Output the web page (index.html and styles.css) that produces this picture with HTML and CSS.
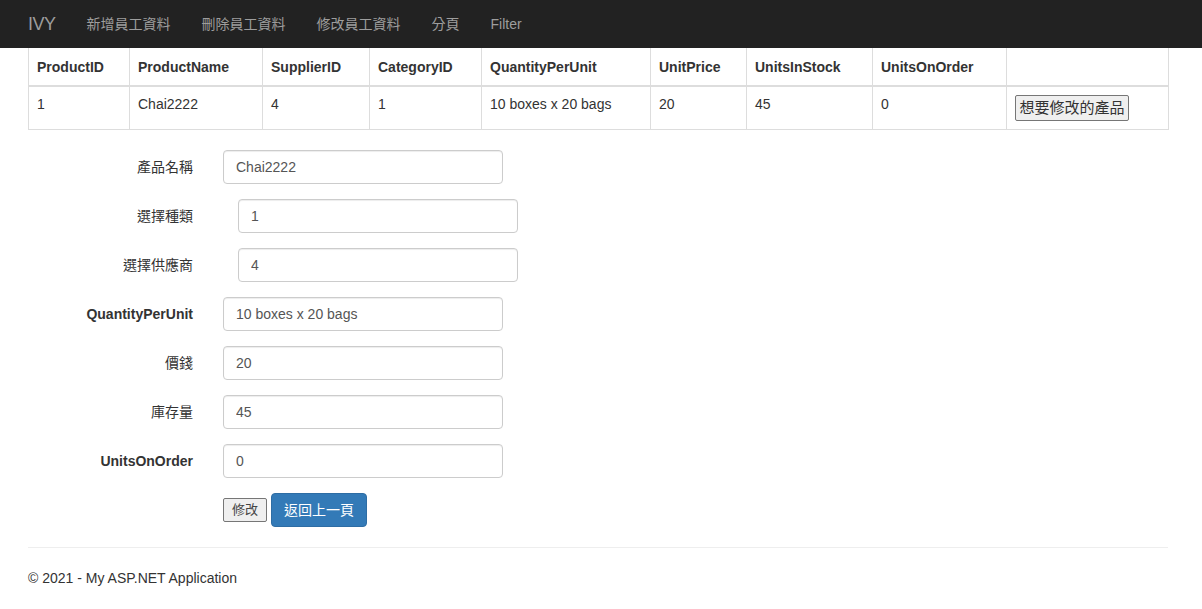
FILE: index.html
```html
<!DOCTYPE html>
<html lang="zh-Hant">
<head>
<meta charset="utf-8">
<title>修改產品</title>
<link rel="stylesheet" href="styles.css">
</head>
<body>
<nav class="navbar">
  <div class="nav-inner">
    <a class="brand" href="#">IVY</a>
    <ul class="nav-links">
      <li><a href="#">新增員工資料</a></li>
      <li><a href="#">刪除員工資料</a></li>
      <li><a href="#">修改員工資料</a></li>
      <li><a href="#">分頁</a></li>
      <li><a href="#">Filter</a></li>
    </ul>
  </div>
</nav>
<main class="container">
  <table class="table">
    <colgroup>
      <col class="c1"><col class="c2"><col class="c3"><col class="c4"><col class="c5"><col class="c6"><col class="c7"><col class="c8"><col class="c9">
    </colgroup>
    <thead>
      <tr>
        <th>ProductID</th>
        <th>ProductName</th>
        <th>SupplierID</th>
        <th>CategoryID</th>
        <th>QuantityPerUnit</th>
        <th>UnitPrice</th>
        <th>UnitsInStock</th>
        <th>UnitsOnOrder</th>
        <th></th>
      </tr>
    </thead>
    <tbody>
      <tr>
        <td>1</td>
        <td>Chai2222</td>
        <td>4</td>
        <td>1</td>
        <td>10 boxes x 20 bags</td>
        <td>20</td>
        <td>45</td>
        <td>0</td>
        <td><button class="btn-plain btn-big" type="button">想要修改的產品</button></td>
      </tr>
    </tbody>
  </table>

  <form class="form-horizontal">
    <div class="form-group">
      <label class="control-label cjk">產品名稱</label>
      <div class="field"><input class="form-control" type="text" value="Chai2222"></div>
    </div>
    <div class="form-group">
      <label class="control-label cjk">選擇種類</label>
      <div class="field indent"><input class="form-control" type="text" value="1"></div>
    </div>
    <div class="form-group">
      <label class="control-label cjk">選擇供應商</label>
      <div class="field indent"><input class="form-control" type="text" value="4"></div>
    </div>
    <div class="form-group">
      <label class="control-label">QuantityPerUnit</label>
      <div class="field"><input class="form-control" type="text" value="10 boxes x 20 bags"></div>
    </div>
    <div class="form-group">
      <label class="control-label cjk">價錢</label>
      <div class="field"><input class="form-control" type="text" value="20"></div>
    </div>
    <div class="form-group">
      <label class="control-label cjk">庫存量</label>
      <div class="field"><input class="form-control" type="text" value="45"></div>
    </div>
    <div class="form-group">
      <label class="control-label">UnitsOnOrder</label>
      <div class="field"><input class="form-control" type="text" value="0"></div>
    </div>
    <div class="form-group buttons">
      <span class="control-label"></span>
      <div class="field btn-row">
        <button class="btn-plain btn-small" type="button">修改</button>
        <a class="btn-primary" href="#">返回上一頁</a>
      </div>
    </div>
  </form>

  <hr class="rule">
  <footer class="footer">
    <p>© 2021 - My ASP.NET Application</p>
  </footer>
</main>
</body>
</html>
```

FILE: styles.css
```css
* { box-sizing: border-box; }

html, body {
  margin: 0;
  padding: 0;
}

body {
  font-family: "Liberation Sans", Arial, "Noto Sans CJK TC", sans-serif;
  font-size: 14px;
  line-height: 20px;
  color: #333;
  background: #fff;
}

.navbar {
  background: #222;
  height: 48px;
}

.nav-inner {
  display: flex;
  align-items: center;
  height: 48px;
  padding-left: 13px;
}

.brand {
  font-size: 18px;
  line-height: 20px;
  color: #9d9d9d;
  text-decoration: none;
  padding: 0 15px;
  letter-spacing: -0.5px;
}

.nav-links {
  list-style: none;
  margin: 0;
  padding: 0 0 0 1px;
  display: flex;
}

.nav-links li a {
  display: block;
  color: #9d9d9d;
  text-decoration: none;
  padding: 0 16px 0 15px;
  font-size: 14px;
  line-height: 20px;
}

.container {
  width: 1140px;
  margin-left: 28px;
}

.table {
  width: 1140px;
  table-layout: fixed;
  border-collapse: collapse;
  margin-bottom: 20px;
}

.c1 { width: 101px; }
.c2 { width: 133px; }
.c3 { width: 107px; }
.c4 { width: 112px; }
.c5 { width: 169px; }
.c6 { width: 96px; }
.c7 { width: 126px; }
.c8 { width: 134px; }
.c9 { width: 162px; }

.table th,
.table td {
  border: 1px solid #ddd;
  padding: 8px;
  text-align: left;
  vertical-align: top;
  line-height: 20px;
}

.table thead tr th {
  border-top: 0;
  border-bottom: 2px solid #ddd;
  font-weight: bold;
  padding-top: 9px;
}

.table tbody td {
  padding-top: 7px;
  padding-bottom: 8px;
}

.btn-plain {
  font-family: "Liberation Sans", Arial, "Noto Sans CJK TC", sans-serif;
  font-size: 13px;
  line-height: 16px;
  color: #444;
  background: #efefef;
  border: 1px solid #767676;
  border-radius: 2px;
  padding: 3px 6px;
  height: 24px;
  white-space: nowrap;
  vertical-align: middle;
}

.btn-small {
  width: 44px;
  padding: 3px 0;
  text-align: center;
}

.btn-big {
  font-size: 15px;
  height: 26px;
  width: 114px;
  padding: 2px 0;
  text-align: center;
  margin-top: 1px;
  margin-left: 0;
  color: #333;
}

.form-horizontal {
  display: block;
}

.form-group {
  display: flex;
  align-items: flex-start;
  margin-bottom: 15px;
}

.control-label {
  display: block;
  width: 180px;
  padding-right: 15px;
  text-align: right;
  font-weight: bold;
  padding-top: 7px;
  line-height: 20px;
}

.control-label.cjk {
  font-weight: normal;
}

.field {
  margin-left: 15px;
}

.field.indent {
  margin-left: 30px;
}

.form-control {
  display: block;
  width: 280px;
  height: 34px;
  padding: 6px 12px;
  font-family: "Liberation Sans", Arial, "Noto Sans CJK TC", sans-serif;
  font-size: 14px;
  line-height: 20px;
  color: #555;
  background: #fff;
  border: 1px solid #ccc;
  border-radius: 4px;
  box-shadow: inset 0 1px 1px rgba(0, 0, 0, 0.075);
}

.buttons {
  margin-bottom: 20px;
}

.btn-row {
  display: flex;
  align-items: center;
  gap: 4px;
}

.btn-primary {
  display: inline-block;
  height: 34px;
  padding: 6px 12px;
  font-size: 14px;
  line-height: 20px;
  color: #fff;
  background: #337ab7;
  border: 1px solid #2e6da4;
  border-radius: 4px;
  text-decoration: none;
}

.rule {
  margin: 0;
  border: 0;
  border-top: 1px solid #eee;
}

.footer p {
  margin: 20px 0 0;
  line-height: 20px;
}
```
